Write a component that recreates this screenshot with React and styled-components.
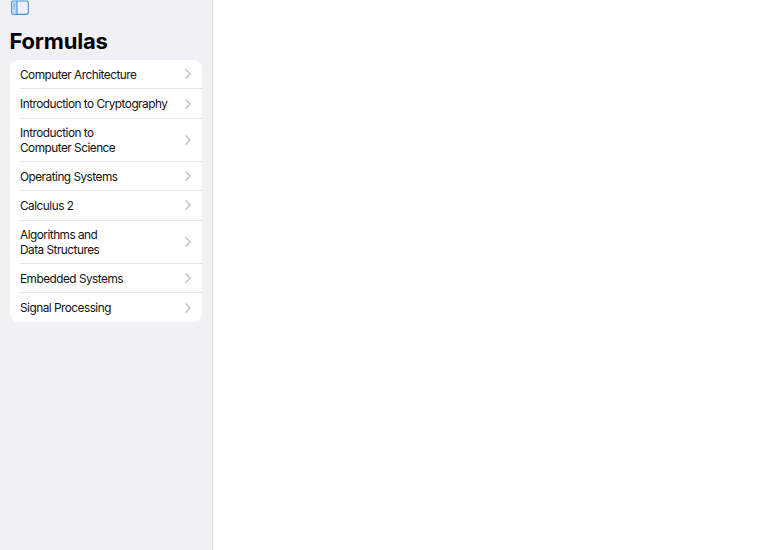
import React from 'react';
import styled, { createGlobalStyle } from 'styled-components';

const GlobalStyle = createGlobalStyle`
  html, body {
    margin: 0;
    padding: 0;
    height: 100%;
    background: #ffffff;
    overflow: hidden;
  }
  #root {
    height: 100%;
  }
`;

const StyledPage = styled.div`
  display: flex;
  height: 550px;
  font-family: Inter, "Liberation Sans", sans-serif;
  color: #000000;
`;

const StyledSidebar = styled.aside`
  width: 213px;
  box-sizing: border-box;
  padding: 0 10px 0 9.5px;
  background: #f0f0f5;
  border-right: 1px solid #dcdce2;
  flex-shrink: 0;
`;

const StyledToolbar = styled.div`
  display: flex;
  height: 16px;
  padding-left: 1.5px;
  align-items: flex-start;
`;

const StyledTitle = styled.h1`
  margin: 13px 0 0;
  height: 31px;
  font-size: 22px;
  line-height: 25px;
  font-weight: 700;
  letter-spacing: -0.2px;
`;

const StyledList = styled.ul`
  list-style: none;
  margin: 0;
  padding: 0;
  background: #ffffff;
  border-radius: 8px;
`;

const StyledRow = styled.li`
  display: flex;
  align-items: center;
  justify-content: space-between;
  box-sizing: border-box;
  margin-left: 10.5px;
  padding-right: 11px;
  height: ${({ $tall }) => ($tall ? '43px' : '29.4px')};
  border-bottom: ${({ $last }) => ($last ? '0' : '1px solid #e3e3e7')};
`;

const StyledLabel = styled.span`
  margin-top: 2px;
  font-size: 11.8px;
  line-height: 14.5px;
  letter-spacing: -0.5px;
  white-space: pre-line;
  color: #111111;
`;

const PanelIcon = () => (
  <svg width="18" height="15" viewBox="0 0 18 15" fill="none">
    <rect x="0.6" y="1" width="16.8" height="13.4" rx="2.4" stroke="#4a90d9" strokeWidth="1.1" />
    <path d="M3 1.5H6V14H3C1.9 14 1.1 13.2 1.1 12.1V3.4C1.1 2.3 1.9 1.5 3 1.5Z" fill="#bcd8f3" />
    <path d="M6 1V14.4" stroke="#4a90d9" strokeWidth="1.1" />
    <path d="M2.5 4H4M2.5 6H4M2.5 8H4" stroke="#4a90d9" strokeWidth="0.8" />
  </svg>
);

const Chevron = () => (
  <svg width="6" height="10" viewBox="0 0 6 10" fill="none">
    <path d="M1 0.8L5 5L1 9.2" stroke="#c0c0c4" strokeWidth="1.4" strokeLinecap="round" strokeLinejoin="round" />
  </svg>
);

const formulas = [
  { label: 'Computer Architecture' },
  { label: 'Introduction to Cryptography' },
  { label: 'Introduction to\nComputer Science', tall: true },
  { label: 'Operating Systems' },
  { label: 'Calculus 2' },
  { label: 'Algorithms and\nData Structures', tall: true },
  { label: 'Embedded Systems' },
  { label: 'Signal Processing' },
];

const App = () => (
  <StyledPage>
    <GlobalStyle />
    <StyledSidebar>
      <StyledToolbar>
        <PanelIcon />
      </StyledToolbar>
      <StyledTitle>Formulas</StyledTitle>
      <StyledList>
        {formulas.map(({ label, tall }, index) => (
          <StyledRow key={label} $tall={tall} $last={index === formulas.length - 1}>
            <StyledLabel>{label}</StyledLabel>
            <Chevron />
          </StyledRow>
        ))}
      </StyledList>
    </StyledSidebar>
  </StyledPage>
);

export default App;
